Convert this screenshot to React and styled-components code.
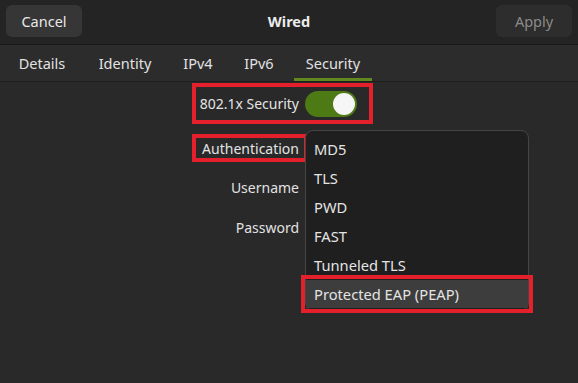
import React from "react";
import styled, { createGlobalStyle } from "styled-components";

const Global = createGlobalStyle`
  html, body { margin: 0; padding: 0; background: #292929; }
  body { font-family: "Noto Sans", "Open Sans", sans-serif; color: #e4e4e4; }
  * { box-sizing: border-box; }
`;

const Page = styled.div`
  position: relative;
  width: 578px;
  height: 383px;
  background: #292929;
  overflow: hidden;
`;

const Header = styled.header`
  height: 45px;
  display: flex;
  align-items: flex-start;
  justify-content: space-between;
  padding: 5px 6px 0 6px;
  background: #242424;
  border-bottom: 1px solid #1a1a1a;
`;

const HeaderButton = styled.button`
  width: 76px;
  height: 32px;
  border: none;
  border-radius: 6px;
  background: ${(p) => (p.$disabled ? "#2d2d2d" : "#363636")};
  color: ${(p) => (p.$disabled ? "#8b8b8b" : "#e8e8e8")};
  font-family: inherit;
  font-size: 14.5px;
  padding: 0;
`;

const Title = styled.div`
  font-weight: 700;
  font-size: 14.5px;
  line-height: 32px;
  color: #ececec;
`;

const TabBar = styled.nav`
  height: 37px;
  display: flex;
  align-items: stretch;
  gap: 9px;
  padding: 0 6px;
  background: #2c2c2c;
  border-bottom: 1px solid #1f1f1f;
`;

const Tab = styled.div`
  width: ${(p) => p.$w}px;
  display: flex;
  align-items: center;
  justify-content: center;
  font-size: 14.5px;
  color: #e2e2e2;
  border-bottom: 3px solid ${(p) => (p.$active ? "#62891f" : "transparent")};
  padding-top: 3px;
`;

const Form = styled.section`
  display: flex;
  flex-direction: column;
  align-items: flex-start;
  padding: 1px 0 0 192px;
  font-size: 14px;
  color: #e4e4e4;
`;

const MarkedRow = styled.div`
  display: flex;
  align-items: center;
  gap: 6px;
  height: ${(p) => p.$h}px;
  width: ${(p) => p.$w}px;
  border: 4px solid #e3202b;
  margin-top: ${(p) => p.$mt || 0}px;
`;

const MarkedText = styled.span`
  width: 103px;
  text-align: right;
  white-space: nowrap;
`;

const Switch = styled.div`
  width: 52px;
  height: 26px;
  border-radius: 13px;
  background: #4d7a14;
  display: flex;
  align-items: center;
  justify-content: flex-end;
  padding: 2px;
  margin-top: 1px;
`;

const Knob = styled.div`
  width: 22px;
  height: 22px;
  border-radius: 50%;
  background: #f6f6f6;
`;

const FieldRow = styled.div`
  height: 40px;
  display: flex;
  align-items: center;
  margin-top: ${(p) => p.$mt || 0}px;
`;

const FieldLabel = styled.label`
  width: 107px;
  text-align: right;
  color: #e2e2e2;
`;

const Popup = styled.ul`
  position: absolute;
  left: 305px;
  top: 130px;
  width: 224px;
  height: 181px;
  margin: 0;
  padding: 3px 0 0 0;
  list-style: none;
  background: #1f1f1f;
  border: 1px solid #454545;
  border-radius: 8px;
  font-size: 14.7px;
`;

const Item = styled.li`
  height: 29px;
  display: flex;
  align-items: center;
  padding-left: 8px;
  color: #e4e4e4;
  background: ${(p) => (p.$selected ? "#3d3d3d" : "transparent")};
  ${(p) =>
    p.$selected &&
    `
    outline: 4px solid #e3202b;
    outline-offset: 1px;
    margin-top: 1px;
    height: 28px;
  `}
`;

const methods = ["MD5", "TLS", "PWD", "FAST", "Tunneled TLS", "Protected EAP (PEAP)"];

export default function App() {
  return (
    <>
      <Global />
      <Page>
        <Header>
          <HeaderButton>Cancel</HeaderButton>
          <Title>Wired</Title>
          <HeaderButton $disabled>Apply</HeaderButton>
        </Header>
        <TabBar>
          <Tab $w={72}>Details</Tab>
          <Tab $w={76}>Identity</Tab>
          <Tab $w={52}>IPv4</Tab>
          <Tab $w={52}>IPv6</Tab>
          <Tab $w={78} $active>
            Security
          </Tab>
        </TabBar>
        <Form>
          <MarkedRow $h={41} $w={181}>
            <MarkedText>802.1x Security</MarkedText>
            <Switch>
              <Knob />
            </Switch>
          </MarkedRow>
          <MarkedRow $h={28} $w={116} $mt={10}>
            <MarkedText>Authentication</MarkedText>
          </MarkedRow>
          <FieldRow $mt={5}>
            <FieldLabel>Username</FieldLabel>
          </FieldRow>
          <FieldRow>
            <FieldLabel>Password</FieldLabel>
          </FieldRow>
        </Form>
        <Popup>
          {methods.map((m, i) => (
            <Item key={m} $selected={i === methods.length - 1}>
              {m}
            </Item>
          ))}
        </Popup>
      </Page>
    </>
  );
}
